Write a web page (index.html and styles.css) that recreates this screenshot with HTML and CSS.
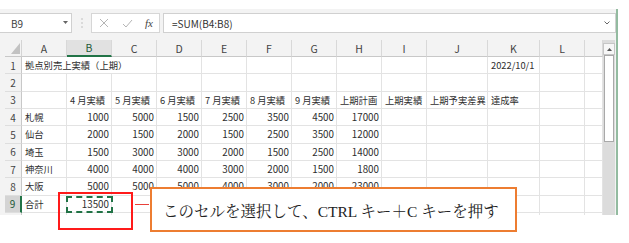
FILE: index.html
```html
<!DOCTYPE html>
<html lang="ja">
<head>
    <meta charset="UTF-8">
    <title>Excel コピー操作</title>
    <link rel="stylesheet" href="styles.css">
</head>
<body>

    <div class="excel">
        <!-- formula bar -->
        <div class="fbar">
            <div class="namebox">
                <span>B9</span>
                <svg class="caret" width="5" height="4" viewBox="0 0 5 4"><polygon points="0,0 5,0 2.5,3" fill="#666"/></svg>
            </div>
            <div class="grip">
                <svg width="2" height="10" viewBox="0 0 2 10"><circle cx="1" cy="1" r="0.8" fill="#bbb"/><circle cx="1" cy="5" r="0.8" fill="#bbb"/><circle cx="1" cy="9" r="0.8" fill="#bbb"/></svg>
            </div>
            <div class="fbtns">
                <svg width="10" height="10" viewBox="0 0 10 10"><path d="M1 1 L9 9 M9 1 L1 9" stroke="#b5b5b5" stroke-width="1"/></svg>
                <svg width="11" height="9" viewBox="0 0 11 9"><path d="M1 5 L4 8 L10 1" stroke="#b5b5b5" stroke-width="1" fill="none"/></svg>
                <span class="fx">fx</span>
            </div>
            <div class="formula">
                <span>=SUM(B4:B8)</span>
                <svg width="6" height="4" viewBox="0 0 6 4"><path d="M0.5 0.5 L3 3 L5.5 0.5" stroke="#666" stroke-width="1" fill="none"/></svg>
            </div>
        </div>

        <div class="sheet">
            <div class="grid" id="grid">
                <div class="corner">
                    <svg width="9" height="11" viewBox="0 0 9 11"><polygon points="9,0 9,11 0,11" fill="#c2c2c2"/></svg>
                </div>
                <!-- column headers and rows are added by the script below -->
            </div>
            <div class="vscroll">
                <div class="vbtn">
                    <svg width="5" height="3" viewBox="0 0 5 3"><polygon points="2.5,0 5,3 0,3" fill="#555"/></svg>
                </div>
                <div class="thumb"></div>
            </div>
        </div>
    </div>

    <!-- annotation -->
    <div class="mark"></div>
    <div class="connector"></div>
    <div class="callout">このセルを選択して、CTRL キー＋C キーを押す</div>

    <script>
        const colNames = ['A', 'B', 'C', 'D', 'E', 'F', 'G', 'H', 'I', 'J', 'K', 'L', ''];

        // null = covered by the text of the cell on its left
        const data = [
            ['拠点別売上実績（上期）', null, null, '', '', '', '', '', '', '', '2022/10/1'],
            [],
            ['', '4 月実績', '5 月実績', '6 月実績', '7 月実績', '8 月実績', '9 月実績', '上期計画', '上期実績', '上期予実差異', '達成率'],
            ['札幌', 1000, 5000, 1500, 2500, 3500, 4500, 17000],
            ['仙台', 2000, 1500, 2000, 1500, 2500, 3500, 12000],
            ['埼玉', 1500, 3000, 3000, 2000, 1500, 2500, 14000],
            ['神奈川', 4000, 4000, 4000, 3000, 2000, 1500, 1800],
            ['大阪', 5000, 5000, 5000, 4000, 3000, 2000, 23000],
            ['合計', 13500],
            []
        ];

        function addCell(grid, text, cls) {
            const cell = document.createElement('div');
            cell.className = cls;
            cell.textContent = text;
            grid.appendChild(cell);
            return cell;
        }

        function buildSheet() {
            const grid = document.getElementById('grid');

            colNames.forEach(name => {
                addCell(grid, name, name === 'B' ? 'ch sel' : 'ch');
            });

            data.forEach((row, r) => {
                // last row is only a sliver, its number is hidden below the edge
                const label = r < 9 ? r + 1 : '';
                addCell(grid, label, r === 8 ? 'rh sel' : 'rh');
                for (let c = 0; c < colNames.length; c++) {
                    const v = row[c];
                    if (v === null) continue;
                    let cls = 'cell';
                    if (typeof v === 'number') cls += ' num';
                    if (r === 0 && c === 0) cls += ' span3';
                    const cell = addCell(grid, v === undefined ? '' : v, cls);
                    if (r === 8 && c === 1) {
                        cell.classList.add('active');
                        const ants = document.createElement('div');
                        ants.className = 'ants';
                        cell.appendChild(ants);
                    }
                }
            });
        }

        buildSheet();
    </script>

</body>
</html>
```

FILE: styles.css
```css
body {
    margin: 0;
    width: 629px;
    height: 243px;
    background-color: #ffffff;
    position: relative;
    overflow: hidden;
    font-family: 'Noto Sans CJK JP', sans-serif;
    color: #2e2e2e;
}

.excel {
    margin-top: 9px;
    width: 616px;
    height: 206px;
    border-right: 2px solid #93bba0;
    background-color: #f3f3f3;
}

/* formula bar */
.fbar {
    height: 31px;
    padding-top: 4px;
    box-sizing: border-box;
    display: flex;
    align-items: flex-start;
    font-size: 10px;
}

.namebox {
    width: 72px;
    height: 20px;
    box-sizing: border-box;
    background-color: #ffffff;
    border: 1px solid #d0d0d0;
    border-left: none;
    display: flex;
    align-items: center;
    justify-content: space-between;
    padding: 0 3px 0 11px;
    color: #444;
}

.grip {
    width: 19px;
    height: 20px;
    display: flex;
    align-items: center;
    justify-content: center;
}

.fbtns {
    width: 69px;
    height: 20px;
    box-sizing: border-box;
    background-color: #ffffff;
    border: 1px solid #d6d6d6;
    display: flex;
    align-items: center;
    justify-content: space-between;
    padding: 0 6px 0 7px;
}

.fx {
    font-family: 'Liberation Serif', serif;
    font-style: italic;
    font-size: 11px;
    color: #444;
}

.formula {
    margin-left: 3px;
    flex: 1;
    height: 20px;
    box-sizing: border-box;
    background-color: #ffffff;
    border: 1px solid #d0d0d0;
    display: flex;
    align-items: center;
    justify-content: space-between;
    padding: 0 5px 0 8px;
    color: #333;
}

/* sheet */
.sheet {
    display: flex;
    height: 175px;
}

.grid {
    margin-left: 5px;
    width: 598px;
    height: 175px;
    overflow: hidden;
    display: grid;
    grid-template-columns: 17px repeat(9, 45px) 61px 52px 45px 18px;
    grid-template-rows: 17px repeat(10, 17.33px);
    font-size: 9.3px;
    background-color: #ffffff;
}

.corner {
    background-color: #f3f3f3;
    border-right: 1px solid #d4d4d4;
    border-bottom: 1px solid #c8c8c8;
    display: flex;
    align-items: flex-end;
    justify-content: flex-end;
    padding: 0 1px 2px 0;
}

.ch {
    background-color: #f3f3f3;
    border-right: 1px solid #d8d8d8;
    border-bottom: 1px solid #c8c8c8;
    display: flex;
    align-items: center;
    justify-content: center;
    color: #444;
    font-size: 10.5px;
}

.ch.sel {
    background-color: #e1e1e1;
    border-bottom: 2px solid #217346;
    color: #1e5a38;
}

.rh {
    background-color: #f3f3f3;
    border-right: 1px solid #c8c8c8;
    border-bottom: 1px solid #dedede;
    display: flex;
    align-items: center;
    justify-content: center;
    color: #444;
    font-size: 10px;
}

.rh.sel {
    background-color: #d4d4d4;
    border-right: 2px solid #217346;
    color: #1e5a38;
}

.cell {
    border-right: 1px solid #e3e3e3;
    border-bottom: 1px solid #e3e3e3;
    display: flex;
    align-items: center;
    padding: 0 3px;
    white-space: nowrap;
    overflow: visible;
    min-width: 0;
}

.cell.num {
    justify-content: flex-end;
    padding: 0 2px 0 0;
    font-size: 9.8px;
}

.span3 {
    grid-column: span 3;
}

.active {
    position: relative;
}

.ants {
    position: absolute;
    left: -1px;
    top: 0px;
    right: -2px;
    bottom: -1px;
    border: 2px dashed #217346;
}

/* vertical scrollbar */
.vscroll {
    width: 12px;
    height: 175px;
    padding-top: 3px;
    box-sizing: border-box;
    background-color: #dcdcdc;
}

.vbtn {
    height: 12px;
    box-sizing: border-box;
    background-color: #f7f7f7;
    border: 1px solid #c6c6c6;
    display: flex;
    align-items: center;
    justify-content: center;
}

.thumb {
    margin: 0 1px;
    height: 87px;
    box-sizing: border-box;
    background-color: #ffffff;
    border: 1px solid #a9a9a9;
}

/* annotation over the sheet */
.mark {
    position: absolute;
    left: 58px;
    top: 192px;
    width: 75px;
    height: 38px;
    box-sizing: border-box;
    border: 2px solid #ff1a1a;
}

.connector {
    position: absolute;
    left: 135px;
    top: 204px;
    width: 14px;
    height: 1px;
    background-color: #e8413a;
}

.callout {
    position: absolute;
    left: 150px;
    top: 187px;
    width: 367px;
    height: 45px;
    box-sizing: border-box;
    border: 2px solid #ed7d31;
    background-color: #ffffff;
    padding-left: 11px;
    display: flex;
    align-items: center;
    font-family: 'Liberation Serif', 'Noto Serif CJK JP', 'Noto Sans CJK JP', serif;
    font-size: 15.5px;
    color: #222;
}
```
